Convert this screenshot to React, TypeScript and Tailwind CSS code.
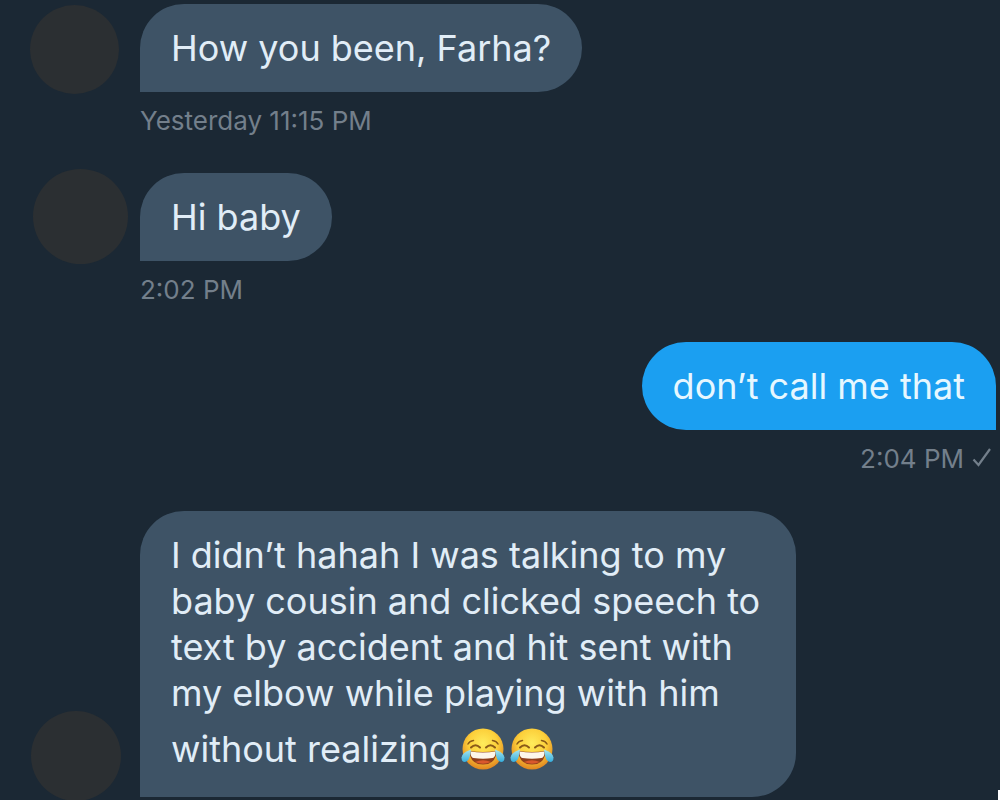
type Message = {
  id: number;
  text: string;
  time?: string;
  mine?: boolean;
  avatar?: string;
  laughs?: number;
};

const messages: Message[] = [
  {
    id: 1,
    text: "How you been, Farha?",
    time: "Yesterday 11:15 PM",
    avatar: "mt-[5px] ml-[30px] size-[89px]",
  },
  {
    id: 2,
    text: "Hi baby",
    time: "2:02 PM",
    avatar: "ml-[33px] size-[95px]",
  },
  { id: 3, text: "don’t call me that", time: "2:04 PM", mine: true },
  {
    id: 4,
    text: "I didn’t hahah I was talking to my baby cousin and clicked speech to text by accident and hit sent with my elbow while playing with him without realizing",
    avatar: "-mb-1 ml-[31px] size-[90px] self-end",
    laughs: 2,
  },
];

function JoyEmoji() {
  return (
    <svg
      viewBox="0 0 44 44"
      className="mt-[11px] mr-[5px] mb-[5px] inline-block size-[44px] align-[-14px]"
      role="img"
      aria-label="face with tears of joy"
    >
      <defs>
        <radialGradient id="face" cx="50%" cy="36%" r="64%">
          <stop offset="0" stopColor="#ffec5c" />
          <stop offset="0.55" stopColor="#fccf3a" />
          <stop offset="1" stopColor="#e08420" />
        </radialGradient>
        <linearGradient id="tear" x1="0" y1="0" x2="0" y2="1">
          <stop offset="0" stopColor="#a9e6ee" />
          <stop offset="1" stopColor="#35aede" />
        </linearGradient>
      </defs>
      <circle cx="22" cy="22" r="20.5" fill="url(#face)" />
      <g fill="none" stroke="#8a5a18" strokeLinecap="round">
        <path d="M7 17 Q8.5 14 12.5 13.5" strokeWidth="1.5" />
        <path d="M37 17 Q35.5 14 31.5 13.5" strokeWidth="1.5" />
        <path d="M10 20.5 Q14.5 16 19 20.5" strokeWidth="2" />
        <path d="M25 20.5 Q29.5 16 34 20.5" strokeWidth="2" />
      </g>
      <path d="M8.5 24 Q22 26 35.5 24 Q35 37.5 22 37.500 Q9 37.5 8.5 24Z" fill="#8f3f1c" />
      <path d="M9.5 24.5 Q22 26.5 34.5 24.5 Q34.500 31 31.5 31 Q22 32.500 12.5 31 Q9.5 31 9.5 24.5Z" fill="#fdf6ea" />
      <path d="M14 35 Q22 31.5 30 35 Q22 38.5 14 35Z" fill="#d9582c" />
      <path d="M10 22.5 Q1 25.5 0.5 30.5 Q0.5 35 4 35 Q9 34.5 10 22.5Z" fill="url(#tear)" />
      <path d="M34 22.5 Q43 25.5 43.5 30.5 Q43.5 35 40 35 Q35 34.5 34 22.5Z" fill="url(#tear)" />
    </svg>
  );
}

function Tick() {
  return (
    <svg
      viewBox="0 0 20 22"
      className="h-[22px] w-5"
      fill="none"
      stroke="currentColor"
      strokeWidth="2.2"
      role="img"
      aria-label="Sent"
    >
      <path d="M1.5 12.500 L6.500 18 L18 2" />
    </svg>
  );
}

function Bubble({ message }: { message: Message }) {
  const tone = message.mine
    ? "rounded-br-none bg-[#1b9ff1] text-[#e6f7ff]"
    : "rounded-bl-none bg-[#3e5366] text-[#e1edf7]";
  return (
    <p className={`w-fit max-w-[656px] rounded-[44px] px-[31px] py-[21px] text-[36px] leading-[46px] ${tone}`}>
      {message.text}
      {message.laughs && (
        <>
          {" "}
          {Array.from({ length: message.laughs }, (_, n) => (
            <JoyEmoji key={n} />
          ))}
        </>
      )}
    </p>
  );
}

export default function App() {
  return (
    <main className="relative h-screen overflow-hidden bg-[#1b2834] font-['Inter',sans-serif]">
      <ul>
        {messages.map((m) => (
          <li key={m.id} className={m.mine ? "flex justify-end pr-1" : "flex"}>
            {!m.mine && (
              <div className="flex w-[140px] shrink-0">
                <div className={`shrink-0 rounded-full bg-[#2b2f32] ${m.avatar}`} />
              </div>
            )}
            <div className={m.mine ? "flex flex-col items-end pt-1" : "pt-1"}>
              <Bubble message={m} />
              {m.time && (
                <div className="flex h-[77px] items-start gap-2 pt-[13px] text-[26px] leading-[32px] text-[#737f8b]">
                  <time>{m.time}</time>
                  {m.mine && (
                    <span className="pt-1 pr-1">
                      <Tick />
                    </span>
                  )}
                </div>
              )}
            </div>
          </li>
        ))}
      </ul>
      <div className="absolute right-0 bottom-0 h-[10px] w-[2px] bg-white" />
    </main>
  );
}
